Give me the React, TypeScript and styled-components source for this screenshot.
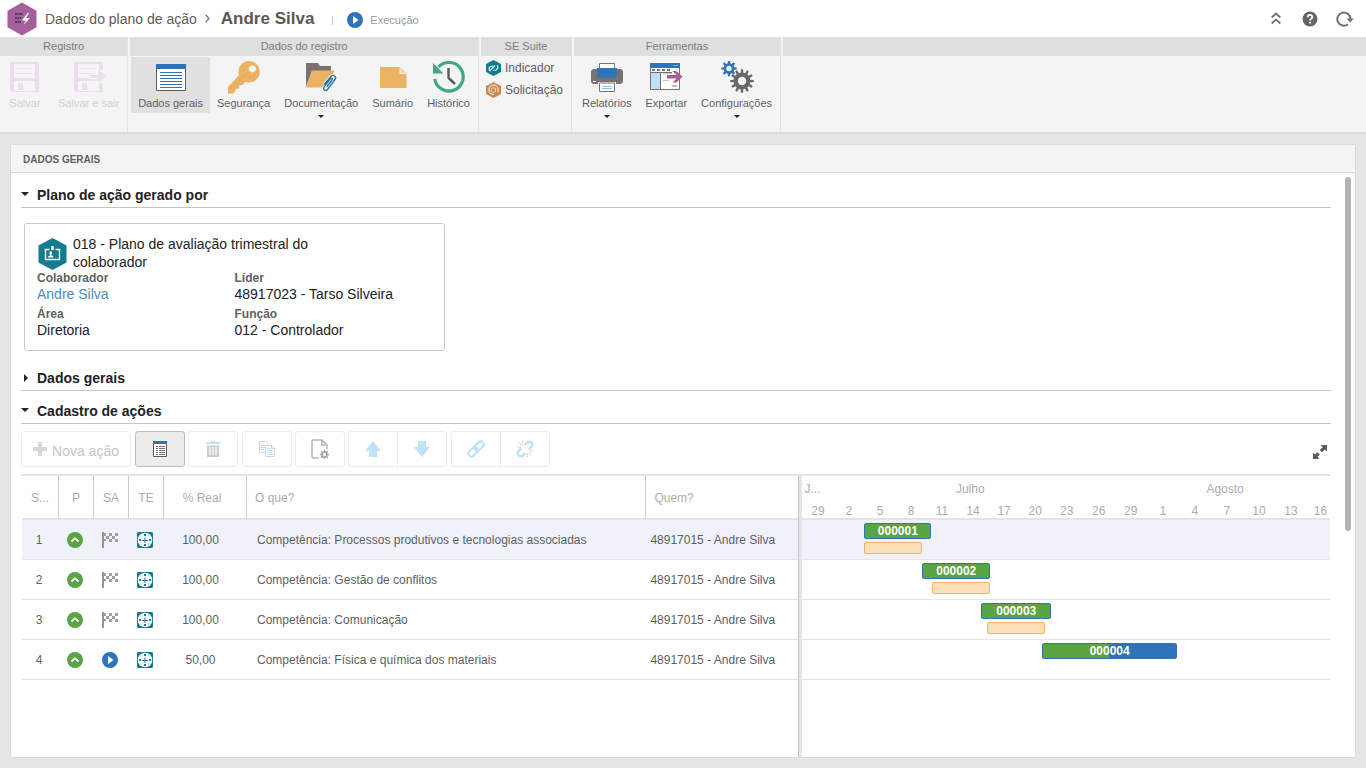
import React from "react";
import styled, { createGlobalStyle, css } from "styled-components";

const GlobalStyle = createGlobalStyle`
  *, *::before, *::after { box-sizing: border-box; }
  html, body, #root { height: 100%; }
  body {
    margin: 0;
    background: #e6e6e6;
    color: #5f5f5f;
    font-family: "Liberation Sans", Arial, sans-serif;
    font-size: 12px;
  }
  button { font: inherit; color: inherit; background: none; border: 0; padding: 0; margin: 0; }
  h1, h2, p, dl, dd, dt, ul { margin: 0; padding: 0; font: inherit; }
  ul { list-style: none; }
  svg { display: block; flex: none; }
`;

/* ---------- page ---------- */

const Page = styled.div`
  display: flex;
  flex-direction: column;
  min-height: 100vh;
`;

const TopBar = styled.header`
  display: flex;
  align-items: center;
  height: 37px;
  padding: 0 12px 0 7px;
  background: #fff;
`;

const Crumb = styled.a`
  margin: 0 8px 0 8px;
  color: #5c5c5c;
  font-size: 14px;
  text-decoration: none;
`;

const RecordName = styled.h1`
  margin-left: 11px;
  color: #5c5757;
  font-size: 17px;
  font-weight: bold;
`;

const Divider = styled.span`
  width: 1px;
  height: 9px;
  margin: 4px 14px 0 18px;
  background: #c9c9c9;
`;

const Status = styled.span`
  display: flex;
  align-items: center;
  gap: 7px;
  margin-top: 3px;
  color: #999;
  font-size: 11px;
`;

const TopActions = styled.div`
  display: flex;
  align-items: center;
  gap: 18px;
  margin-left: auto;
  button:first-child { margin-right: 3px; }
`;

/* ---------- ribbon ---------- */

const Ribbon = styled.nav`
  display: flex;
  gap: 2px;
  height: 97px;
  border-bottom: 2px solid #dcdcdc;
  background: #f4f4f4;
`;

const Group = styled.section<{ $fill?: boolean }>`
  display: flex;
  flex-direction: column;
  flex: ${(p) => (p.$fill ? "1" : "none")};
  border-right: ${(p) => (p.$fill ? "0" : "1px solid #e2e2e2")};
`;

const GroupTitle = styled.h2`
  height: 19px;
  background: #dfdfdf;
  color: #7b7b7b;
  font-size: 11px;
  line-height: 19px;
  text-align: center;
`;

const GroupBody = styled.div<{ $flush?: boolean }>`
  display: flex;
  align-items: flex-start;
  padding: 1px ${(p) => (p.$flush ? 0 : 1)}px 0;
`;

const LinkColumn = styled.div`
  display: flex;
  flex-direction: column;
  padding: 1px 8px 0 5px;
`;

const RibbonLink = styled.a`
  display: flex;
  align-items: center;
  gap: 4px;
  height: 22px;
  color: #5f5f5f;
  font-size: 12px;
  text-decoration: none;
`;

const RibbonItem = styled.button<{ $active?: boolean; $wide?: boolean }>`
  display: flex;
  flex-direction: column;
  align-items: center;
  min-height: 56px;
  padding: 4px ${(p) => (p.$wide ? 8 : 7)}px 0;
  background: ${(p) => (p.$active ? "#e0e0e0" : "transparent")};
  color: #5f5f5f;
  font-size: 11px;
  line-height: 14px;
  &:disabled { color: #cfcfcf; }
  svg + span { margin-top: 1px; }
`;

const Caret = styled.i`
  margin-top: 5px;
  border: 3px solid transparent;
  border-top-color: #222;
  border-bottom: 0;
`;

/* ---------- panel ---------- */

const Panel = styled.main`
  display: flex;
  flex: 1;
  flex-direction: column;
  margin: 10px;
  border: 1px solid #dadada;
  border-radius: 2px;
  background: #fff;
`;

const PanelTitle = styled.h2`
  height: 28px;
  padding-left: 12px;
  border-bottom: 1px solid #dadada;
  background: #f4f4f4;
  color: #5f5f5f;
  font-size: 10px;
  font-weight: bold;
  line-height: 29px;
`;

const PanelBody = styled.div`
  display: flex;
  flex: 1;
  padding: 2px 4px 0 10px;
`;

const Content = styled.div`
  display: flex;
  flex: 1;
  flex-direction: column;
  min-width: 0;
`;

const ScrollThumb = styled.div`
  width: 6px;
  height: 354px;
  margin: 2px 0 0 14px;
  border-radius: 3px;
  background: #b3b3b3;
`;

const SectionHead = styled.button<{ $open?: boolean }>`
  display: flex;
  align-items: center;
  width: 100%;
  height: 33px;
  padding-top: 8px;
  border-bottom: 1px solid #c4c4c4;
  color: #222;
  font-size: 14px;
  font-weight: bold;
  text-align: left;
  &::before {
    content: "";
    margin-right: ${(p) => (p.$open ? 8 : 9)}px;
    margin-left: ${(p) => (p.$open ? 0 : 3)}px;
    border: 4px solid transparent;
    ${(p) =>
      p.$open
        ? css`margin-bottom: 2px; border-top-color: #222; border-bottom: 0;`
        : css`border-left-color: #222; border-right: 0;`}
  }
`;

const Card = styled.article`
  width: 421px;
  height: 128px;
  margin: 15px 0 7px 3px;
  padding: 11px 12px;
  border: 1px solid #c9c9c9;
  border-radius: 3px;
  color: #222;
  font-size: 14px;
`;

const CardTitle = styled.div`
  display: flex;
  gap: 6px;
  height: 35px;
  max-width: 300px;
  line-height: 18px;
  svg { margin: 3px 0 0 1px; }
`;

const Fields = styled.dl`
  display: grid;
  grid-template-columns: 1fr 1fr;
  row-gap: 4px;
  line-height: 16px;
  dt { color: #5f5f5f; font-size: 12px; font-weight: bold; }
  a { color: #4c8bc4; text-decoration: none; }
`;

/* ---------- toolbar ---------- */

const Toolbar = styled.div`
  display: flex;
  gap: 4px;
  padding: 7px 4px 7px 0;
`;

const Cluster = styled.div`
  display: flex;
  gap: 3px;
`;

const Pair = styled.div`
  display: flex;
  button:first-child { border-radius: 3px 0 0 3px; }
  button:last-child { margin-left: -1px; border-radius: 0 3px 3px 0; }
`;

const ToolButton = styled.button<{ $active?: boolean; $wide?: boolean }>`
  display: flex;
  align-items: center;
  justify-content: center;
  gap: 5px;
  width: ${(p) => (p.$wide ? 110 : 50)}px;
  height: 36px;
  border: 1px solid ${(p) => (p.$active ? "#bdbdbd" : "#ececec")};
  border-radius: 3px;
  background: ${(p) => (p.$active ? "#ececec" : "#fff")};
  color: #c6c6c6;
  font-size: 14px;
  span { margin-top: 3px; }
`;

const ExpandButton = styled.button`
  align-self: center;
  margin: 6px 0 0 auto;
`;

/* ---------- plan grid ---------- */

const Plan = styled.div`
  display: flex;
  flex: 1;
  align-items: stretch;
  border-top: 2px solid #e4e4e4;
  margin-right: 1px;
`;

const ActionsPane = styled.div`
  flex: 777;
  min-width: 0;
  padding-left: 1px;
`;

const Splitter = styled.div`
  width: 4px;
  border-left: 1px solid #c6c6c6;
  background: #e6e6e6;
`;

const ActionsTable = styled.table`
  width: 100%;
  border-spacing: 0;
  table-layout: fixed;
  th, td { padding: 0; text-align: center; font-weight: normal; }
  th {
    height: 44px;
    padding-top: 2px;
    border-right: 1px solid #cbcbcb;
    border-bottom: 2px solid #e4e4e4;
    color: #acacac;
  }
  th:last-child { border-right: 0; }
  td { height: 40px; padding-right: 3px; border-bottom: 1px solid #e4e4e4; }
  td svg { margin: 0 auto; }
  th:nth-child(5) { padding-right: 6px; }
  td:nth-child(5) { padding-right: 10px; }
  th:nth-child(n + 6), td:nth-child(n + 6) { text-align: left; }
  th:nth-child(n + 6) { padding-left: 8px; }
  td:nth-child(6) { padding-left: 10px; }
  td:nth-child(7) { padding-left: 4px; }
`;

const ActionRow = styled.tr<{ $selected?: boolean }>`
  background: ${(p) => (p.$selected ? "#eff3f9" : "#fff")};
`;

const TimelinePane = styled.div`
  flex: 528;
  min-width: 0;
`;

const TimelineHead = styled.div`
  height: 44px;
  border-bottom: 2px solid #e4e4e4;
  color: #acacac;
  text-align: center;
`;

const Months = styled.div`
  display: grid;
  grid-template-columns: 22fr 292fr 218fr;
  margin-right: -4px;
  line-height: 27px;
  span:first-child { padding-left: 2px; text-align: left; }
`;

const Days = styled.div`
  display: grid;
  grid-template-columns: repeat(8, 31fr) repeat(8, 32fr) 23fr;
  line-height: 16px;
  span:last-child { padding-left: 4px; }
`;

const TimelineRow = styled.li<{ $selected?: boolean }>`
  display: flex;
  flex-direction: column;
  gap: 3px;
  height: 40px;
  padding-top: 3px;
  border-bottom: 1px solid #e4e4e4;
  background: ${(p) => (p.$selected ? "#eff3f9" : "#fff")};
`;

const Bar = styled.div<{ $half?: boolean }>`
  height: 16px;
  border: 1px solid #2f74b8;
  border-radius: 2px;
  background: ${(p) => (p.$half ? "linear-gradient(90deg, #5aa543 50%, #2f74b8 50%)" : "#5aa543")};
  color: #fff;
  font-weight: bold;
  line-height: 14px;
  text-align: center;
`;

const Baseline = styled.div`
  height: 12px;
  border: 1px solid #efb469;
  border-radius: 2px;
  background: #fcdfb6;
`;

/* ---------- drawings ---------- */

function gearPath(cx: number, cy: number, outer: number, inner: number, hole: number, teeth: number) {
  const step = (Math.PI * 2) / teeth;
  let d = "";
  for (let i = 0; i < teeth; i++) {
    const corners: [number, number][] = [[-0.3, inner], [-0.17, outer], [0.17, outer], [0.3, inner]];
    corners.forEach(([offset, r]) => {
      const a = (i + offset) * step;
      d += `${d ? "L" : "M"}${(cx + r * Math.cos(a)).toFixed(2)} ${(cy + r * Math.sin(a)).toFixed(2)}`;
    });
  }
  return `${d}ZM${cx + hole} ${cy}a${hole} ${hole} 0 1 0 ${-2 * hole} 0a${hole} ${hole} 0 1 0 ${2 * hole} 0Z`;
}

const RibbonSvg = ({ children }: { children: React.ReactNode }) => (
  <svg width="34" height="34" viewBox="0 0 34 34" fill="none" aria-hidden="true">{children}</svg>
);

const Floppy = ({ exit }: { exit?: boolean }) => (
  <RibbonSvg>
    <path d="M2 1h29v30H4l-2-2z" fill="#e8dfeb" />
    <path d="M6 3h21v14H6zM6 20h21v10H6z" fill="#f6f4f7" />
    <path d="M9 7.5h15M9 12.5h15" stroke="#e8e3ea" />
    <path d="M10 22h5v7h-5z" fill="#e8dfeb" />
    {exit && (
      <>
        <path d="M28 9h4v13h-4z" fill="#f4f4f4" />
        <path d="M18 13.5h8V9h2l6 6.500-6 6.500h-2v-4.500h-8z" fill="#e8dfeb" stroke="#f4f4f4" />
      </>
    )}
  </RibbonSvg>
);

const FormIcon = () => (
  <RibbonSvg>
    <path d="M2.500 3.500h29v26h-29z" fill="#fff" stroke="#605d5b" />
    <path d="M2 3h30v5H2z" fill="#2f74b8" />
    <path d="M6 11.500h22M6 14.500h22M6 17.500h22M6 20.500h22M6 23.500h22M6 26.500h22" stroke="#2f74b8" />
  </RibbonSvg>
);

const KeyIcon = () => (
  <RibbonSvg>
    <path
      d="M22 0a10.500 10.500 0 0 1 0 21.500l-4-.5-2.500 3h-3l-.5 3.500-3.500.5-.5 3-2 1.500H1v-6.500L11.700 14.500 11.500 11A10.500 10.500 0 0 1 22 0zM25.300 4.200a3.600 3.600 0 1 0 .01 0z"
      fill="#eab364" fillRule="evenodd"
    />
    <path d="M16 9h.8M19 13h.8M23 16h.8M27 14h.8M16 15h.8M12 19h.8M8 23h.8M4 27h.8" stroke="#c98846" />
  </RibbonSvg>
);

const FolderClipIcon = () => (
  <RibbonSvg>
    <path d="M2 2h12l2 3h11v5H8L2 26z" fill="#787372" />
    <path d="M8 9.500h22.500L25 26.500H2z" fill="#eab364" />
    <path
      d="m20 23.500 7-8c2.500-2.500 6 0 4 3l-7.500 10c-1.500 2-5 .5-3.500-2.500l6.500-8.500c1-1 2.500 0 1.500 1.500l-5 6.500"
      stroke="#f4f4f4" strokeWidth="3"
    />
    <path
      d="m20 23.500 7-8c2.500-2.500 6 0 4 3l-7.500 10c-1.500 2-5 .5-3.500-2.500l6.500-8.500c1-1 2.500 0 1.500 1.500l-5 6.500"
      stroke="#2273aa" strokeWidth="1.300"
    />
  </RibbonSvg>
);

const NoteIcon = () => (
  <RibbonSvg>
    <path d="M4 6h20l6.500 6.500V27H4z" fill="#eab364" />
    <path d="M24 6.500v6h6" fill="#f6dbb2" stroke="#f4f4f4" />
  </RibbonSvg>
);

const HistoryIcon = () => (
  <RibbonSvg>
    <path d="M6.500 6A14.300 14.300 0 1 1 2.800 18" stroke="#42a785" strokeWidth="3.200" />
    <path d="M1 2v10.500h10.500z" fill="#42a785" />
    <path d="M16.500 7v10l6.500 6" stroke="#5c5858" strokeWidth="2.400" />
  </RibbonSvg>
);

const PrinterIcon = () => (
  <RibbonSvg>
    <path d="M3 8h28l2 2v11l-2 2h-5v-2H8v2H3l-2-2V10z" fill="#787372" />
    <path d="M9.500 2.500h15v6h-15z" fill="#fff" stroke="#787372" />
    <path d="M7 7h20v8l-2 2H9l-2-2z" fill="#2f74b8" />
    <path d="M9.500 22h15v8.500h-15z" fill="#fff" stroke="#787372" />
    <path d="M12 25.500h10M12 27.500h10" stroke="#8ac4ea" />
    <path d="M3 20.500h3" stroke="#fff" />
  </RibbonSvg>
);

const ExportIcon = () => (
  <RibbonSvg>
    <path d="M1.500 2.500h29v26h-29z" fill="#fff" stroke="#787372" />
    <path d="M1 2h30v5H1z" fill="#2f74b8" />
    <path d="M24 4.500h5" stroke="#7eb0df" />
    <path d="M3 9h19" stroke="#787372" strokeWidth="2" strokeDasharray="3 2" />
    <path d="M1 11.500h22M11.500 12v17" stroke="#787372" />
    <path d="M2 12h9v16H2z" fill="#bfe0f6" />
    <path d="M14 12.500h9M14 19.500h6" stroke="#c5c5c5" />
    <path d="M23 25h5" stroke="#bbb" strokeWidth="2" />
    <path d="M18 14h9.500L23.500 10h4l6 5.700-6 5.800h-4l4-4H18z" fill="#a45d98" />
  </RibbonSvg>
);

const GearsIcon = () => (
  <RibbonSvg>
    <path d={gearPath(9, 7.5, 7.8, 5.4, 2.7, 8)} fill="#2f74b8" fillRule="evenodd" />
    <path d={gearPath(22, 20, 11.8, 8.4, 4.2, 12)} fill="#6b6767" fillRule="evenodd" />
  </RibbonSvg>
);

const HEXAGON = "M7.500 0 15 4v8l-7.500 4L0 12V4z";

const IndicatorIcon = () => (
  <svg width="15" height="16" viewBox="0 0 15 16" fill="none" aria-hidden="true">
    <path d={HEXAGON} fill="#147a90" />
    <path
      d="M7 6 4.500 6.500C2.800 7.500 2.500 10 4 10.800L9 5.500M7.500 10.500l2.500-.5c2-1 2.500-3.500 1-4.800"
      stroke="#e4f3f6" strokeWidth="1.200"
    />
  </svg>
);

const RequestIcon = () => (
  <svg width="15" height="16" viewBox="0 0 15 16" fill="none" aria-hidden="true">
    <path d={HEXAGON} fill="#c98a55" />
    <path d="M5.300 9.500C4.500 6.500 6.500 5 9.500 6.500c.5 2-.5 4-2 4s-2-.5-2.200-1" stroke="#f5e3d2" />
    <path d="M3 10V7.500a4.500 4.500 0 0 1 9 0V10M3.500 10.500c1 1.500 2.500 2 4.500 2" stroke="#f5e3d2" strokeWidth="1.200" />
  </svg>
);

const LogoIcon = () => (
  <svg width="30" height="34" viewBox="0 0 30 34" aria-hidden="true">
    <path d="M15 .500 29.500 8.700v16.600L15 33.500.500 25.300V8.700z" fill="#a4609a" />
    <path d="M8 12h8M8 16h6M8 20h6" stroke="#3d2c58" strokeWidth="1.500" strokeDasharray="2 .5" />
    <path d="M20.500 11 15 18.500h3.800L16.500 23l6.500-7h-4l3-5z" fill="#fff" />
  </svg>
);

const PlayIcon = () => (
  <svg width="16" height="16" viewBox="0 0 16 16" aria-hidden="true">
    <circle cx="8" cy="8" r="8" fill="#2f74b8" />
    <path d="M6 4v8l5.500-4z" fill="#fff" />
  </svg>
);

const BadgeIcon = () => (
  <svg width="29" height="32" viewBox="0 0 29 32" fill="none" aria-hidden="true">
    <path d="M14.500 0 28.500 7.500v17L14.500 32 .500 24.500v-17z" fill="#147a90" />
    <path d="M11.500 11.500h-4v10h14v-10h-4" stroke="#fff" strokeWidth="1.400" />
    <path d="M13.300 8h2.400v4h-2.400zM10 19.500c0-1.500 1-2 2-2V16h-.5v-2.500h2.500V16h-.5v1.500c1 0 2 .5 2 2z" fill="#fff" />
  </svg>
);

const PriorityIcon = () => (
  <svg width="16" height="16" viewBox="0 0 16 16" role="img" aria-label="Prioridade">
    <circle cx="8" cy="8" r="8" fill="#5aa543" />
    <path d="m4.500 9.500 3.500-3.200 3.500 3.200" fill="none" stroke="#fff" strokeWidth="2" />
  </svg>
);

const FlagIcon = () => (
  <svg width="16" height="16" viewBox="0 0 16 16" role="img" aria-label="Finalizada">
    <path d="M0 0h2v16H0z" fill="#949494" />
    <path d="M2 1h2v3H2zM7 1h3v3H7zM13 1h3v3h-3zM4 4h3v3H4zM10 4h3v3h-3zM2 7h2v2H2zM7 7h3v3H7zM13 7h3v3h-3z" fill="#a0a0a0" />
  </svg>
);

const DeadlineIcon = () => (
  <svg width="16" height="16" viewBox="0 0 16 16" role="img" aria-label="Prazo">
    <path d="M1 0h14l1 1v14l-1 1H1l-1-1V1z" fill="#147a90" />
    <circle cx="8" cy="8" r="7.300" fill="#fff" />
    <path d="M7 2h2v2H7zM7 12h2v2H7zM2 7h2v2H2zM12 7h2v2h-2zM5 8h6v1H5zM7.500 5.500h1V11h-1z" fill="#2a71b0" />
    <path d="M3.500 3.500h1v1h-1zM11.500 3.500h1v1h-1zM3.500 11.500h1v1h-1zM11.500 11.500h1v1h-1z" fill="#6fa3c9" />
  </svg>
);

const CollapseIcon = () => (
  <svg width="10" height="13" viewBox="0 0 10 13" fill="none" stroke="#777272" strokeWidth="2" aria-hidden="true">
    <path d="m.700 5.500 4.300-4 4.300 4M.700 11.500l4.300-4 4.300 4" />
  </svg>
);

const HelpIcon = () => (
  <svg width="16" height="16" viewBox="0 0 16 16" fill="none" aria-hidden="true">
    <circle cx="8" cy="8" r="7.500" fill="#686464" />
    <path d="M5.700 6.200c0-3 4.600-3 4.600-.2C10.300 7.800 8 7.500 8 9.500" stroke="#fff" strokeWidth="1.800" />
    <path d="M7 10.700h2v1.800H7z" fill="#fff" />
  </svg>
);

const RefreshIcon = () => (
  <svg width="18" height="16" viewBox="0 0 18 16" fill="none" aria-hidden="true">
    <path d="M12 13.300A6.600 6.600 0 1 1 14.500 8" stroke="#777272" strokeWidth="2" />
    <path d="M10.500 7.500H18l-3.800 4z" fill="#777272" />
  </svg>
);

const ToolSvg = ({ children }: { children: React.ReactNode }) => (
  <svg width="18" height="18" viewBox="0 0 18 18" fill="none" aria-hidden="true">{children}</svg>
);

const PlusIcon = () => (
  <svg width="14" height="14" viewBox="0 0 14 14" aria-hidden="true">
    <path d="M5 0h4v5h5v4H9v5H5V9H0V5h5z" fill="#d6d6d6" />
  </svg>
);

const ListIcon = () => (
  <ToolSvg>
    <path d="M2.500 1.500h13v15h-13z" fill="#fff" stroke="#5c5858" />
    <path d="M2 1h14v3H2z" fill="#2f74b8" />
    <path d="M5 6.500h2M8 6.500h6M5 8.500h2M8 8.500h6M5 10.500h2M8 10.500h6M5 12.500h2M8 12.500h6M5 14.500h2M8 14.500h6" stroke="#77716f" />
  </ToolSvg>
);

const TrashIcon = () => (
  <ToolSvg>
    <path d="M2 2h14v2H2zM7 1h4v1H7z" fill="#bfe2f7" />
    <path d="M3 5.500h12V17H3z" fill="#cdcdcd" />
    <path d="M6 7v8M9 7v8M12 7v8" stroke="#fff" strokeWidth="1.300" />
  </ToolSvg>
);

const CopyIcon = () => (
  <ToolSvg>
    <path d="M7 12.500H1.500v-11h6l3 3M3 5.500h4M3 7.500h4M3 9.500h3" stroke="#d6d6d6" />
    <path d="M7.500 5.500h6l3 3v8h-9zM13.500 5.500v3h3" fill="#fff" stroke="#d6d6d6" />
    <path d="M9 8.500h3M9 10.500h6M9 12.500h6M9 14.500h6" stroke="#bfe2f7" />
  </ToolSvg>
);

const DocGearIcon = () => (
  <svg width="18" height="20" viewBox="0 0 18 20" fill="none" aria-hidden="true">
    <path d="M8 19H2.200A1.200 1.200 0 0 1 1 17.800V2.200A1.200 1.200 0 0 1 2.200 1H11l5 5v4M11 1v5h5" stroke="#b5b5b5" strokeWidth="1.500" />
    <path d={gearPath(13.500, 15.500, 4.700, 3.300, 1.700, 8)} fill="#a2a2a2" fillRule="evenodd" />
  </svg>
);

const UpIcon = () => (
  <ToolSvg><path d="M9 1 17 11h-4v6H5v-6H1z" fill="#bfe2f7" /></ToolSvg>
);

const DownIcon = () => (
  <ToolSvg><path d="M9 17 1 7h4V1h8v6h4z" fill="#bfe2f7" /></ToolSvg>
);

const LinkIcon = () => (
  <ToolSvg>
    <g transform="rotate(-45 9 9)" stroke="#bfe2f7" strokeWidth="2.200">
      <rect x="-.5" y="6" width="10.500" height="6" rx="3" />
      <rect x="8" y="6" width="10.500" height="6" rx="3" />
    </g>
  </ToolSvg>
);

const UnlinkIcon = () => (
  <ToolSvg>
    <g transform="rotate(-45 9 9)" stroke="#bfe2f7" strokeWidth="2.500">
      <path d="M6.500 6H3a3 3 0 0 0 0 6h3.500M11.500 6H15a3 3 0 0 1 0 6h-3.500" />
    </g>
    <path d="M6.500 1v4M2.500 2.500l3 3M1 7h4M11.500 17v-4M15.500 15.500l-3-3M17 11h-4" stroke="#c4c4c4" strokeDasharray="1.500 .7" />
  </ToolSvg>
);

const ExpandIcon = () => (
  <svg width="14" height="14" viewBox="0 0 14 14" aria-hidden="true">
    <path d="M7.500 0H14v6.500l-2-2-3 2.800L6.800 5l3-3zM6.500 14H0V7.500l2 2 2.500-2.300L6.800 9.500 4.500 12z" fill="#5b5b5b" />
  </svg>
);

/* ---------- data ---------- */

const TIMELINE_SPAN = 528;
const pct = (units: number) => `${(units / TIMELINE_SPAN) * 100}%`;

const days = [29, 2, 5, 8, 11, 14, 17, 20, 23, 26, 29, 1, 4, 7, 10, 13, 16];

type Span = [start: number, length: number];
type Action = { id: number; real: string; what: string; running?: boolean; plan: Span; baseline?: Span };

const actions: Action[] = [
  { id: 1, real: "100,00", what: "Competência: Processos produtivos e tecnologias associadas", plan: [62, 67], baseline: [62, 58] },
  { id: 2, real: "100,00", what: "Competência: Gestão de conflitos", plan: [120, 68], baseline: [130, 58] },
  { id: 3, real: "100,00", what: "Competência: Comunicação", plan: [179, 70], baseline: [185, 58] },
  { id: 4, real: "50,00", what: "Competência: Física e química dos materiais", running: true, plan: [240, 135] },
];

/* ---------- app ---------- */

export default function App() {
  return (
    <Page>
      <GlobalStyle />
      <TopBar>
        <LogoIcon />
        <Crumb href="#plano">Dados do plano de ação</Crumb>
        <svg width="5" height="9" viewBox="0 0 5 9" fill="none" aria-hidden="true">
          <path d="m.700.700 3.300 3.800L.700 8.300" stroke="#8a8686" strokeWidth="1.600" />
        </svg>
        <RecordName>Andre Silva</RecordName>
        <Divider />
        <Status><PlayIcon />Execução</Status>
        <TopActions>
          <button aria-label="Recolher"><CollapseIcon /></button>
          <button aria-label="Ajuda"><HelpIcon /></button>
          <button aria-label="Atualizar"><RefreshIcon /></button>
        </TopActions>
      </TopBar>

      <Ribbon>
        <Group>
          <GroupTitle>Registro</GroupTitle>
          <GroupBody $flush>
            <RibbonItem disabled $wide><Floppy /><span>Salvar</span></RibbonItem>
            <RibbonItem disabled $wide><Floppy exit /><span>Salvar e sair</span></RibbonItem>
          </GroupBody>
        </Group>
        <Group>
          <GroupTitle>Dados do registro</GroupTitle>
          <GroupBody>
            <RibbonItem $active><FormIcon /><span>Dados gerais</span></RibbonItem>
            <RibbonItem><KeyIcon /><span>Segurança</span></RibbonItem>
            <RibbonItem><FolderClipIcon /><span>Documentação</span><Caret /></RibbonItem>
            <RibbonItem><NoteIcon /><span>Sumário</span></RibbonItem>
            <RibbonItem><HistoryIcon /><span>Histórico</span></RibbonItem>
          </GroupBody>
        </Group>
        <Group>
          <GroupTitle>SE Suite</GroupTitle>
          <LinkColumn>
            <RibbonLink href="#indicador"><IndicatorIcon />Indicador</RibbonLink>
            <RibbonLink href="#solicitacao"><RequestIcon />Solicitação</RibbonLink>
          </LinkColumn>
        </Group>
        <Group>
          <GroupTitle>Ferramentas</GroupTitle>
          <GroupBody>
            <RibbonItem><PrinterIcon /><span>Relatórios</span><Caret /></RibbonItem>
            <RibbonItem><ExportIcon /><span>Exportar</span></RibbonItem>
            <RibbonItem><GearsIcon /><span>Configurações</span><Caret /></RibbonItem>
          </GroupBody>
        </Group>
        <Group $fill><GroupTitle /></Group>
      </Ribbon>

      <Panel>
        <PanelTitle>DADOS GERAIS</PanelTitle>
        <PanelBody>
          <Content>
            <SectionHead $open aria-expanded="true">Plano de ação gerado por</SectionHead>
            <Card>
              <CardTitle>
                <BadgeIcon />
                <p>018 - Plano de avaliação trimestral do colaborador</p>
              </CardTitle>
              <Fields>
                <div><dt>Colaborador</dt><dd><a href="#andre">Andre Silva</a></dd></div>
                <div><dt>Líder</dt><dd>48917023 - Tarso Silveira</dd></div>
                <div><dt>Área</dt><dd>Diretoria</dd></div>
                <div><dt>Função</dt><dd>012 - Controlador</dd></div>
              </Fields>
            </Card>
            <SectionHead aria-expanded="false">Dados gerais</SectionHead>
            <SectionHead $open aria-expanded="true">Cadastro de ações</SectionHead>

            <Toolbar>
              <ToolButton $wide disabled><PlusIcon /><span>Nova ação</span></ToolButton>
              <Cluster>
                <ToolButton $active aria-label="Detalhes"><ListIcon /></ToolButton>
                <ToolButton disabled aria-label="Excluir"><TrashIcon /></ToolButton>
              </Cluster>
              <Cluster>
                <ToolButton disabled aria-label="Copiar"><CopyIcon /></ToolButton>
                <ToolButton disabled aria-label="Configurar"><DocGearIcon /></ToolButton>
                <Pair>
                  <ToolButton disabled aria-label="Mover para cima"><UpIcon /></ToolButton>
                  <ToolButton disabled aria-label="Mover para baixo"><DownIcon /></ToolButton>
                </Pair>
              </Cluster>
              <Pair>
                <ToolButton disabled aria-label="Vincular"><LinkIcon /></ToolButton>
                <ToolButton disabled aria-label="Desvincular"><UnlinkIcon /></ToolButton>
              </Pair>
              <ExpandButton aria-label="Expandir"><ExpandIcon /></ExpandButton>
            </Toolbar>

            <Plan>
              <ActionsPane>
                <ActionsTable>
                  <colgroup>
                    <col width="37" /><col width="35" /><col width="35" /><col width="35" />
                    <col width="83" /><col /><col width="152" />
                  </colgroup>
                  <thead>
                    <tr>
                      <th>S...</th><th>P</th><th>SA</th><th>TE</th><th>% Real</th><th>O que?</th><th>Quem?</th>
                    </tr>
                  </thead>
                  <tbody>
                    {actions.map((a) => (
                      <ActionRow key={a.id} $selected={a.id === 1}>
                        <td>{a.id}</td>
                        <td><PriorityIcon /></td>
                        <td>{a.running ? <PlayIcon /> : <FlagIcon />}</td>
                        <td><DeadlineIcon /></td>
                        <td>{a.real}</td>
                        <td>{a.what}</td>
                        <td>48917015 - Andre Silva</td>
                      </ActionRow>
                    ))}
                  </tbody>
                </ActionsTable>
              </ActionsPane>
              <Splitter />
              <TimelinePane>
                <TimelineHead>
                  <Months><span>J...</span><span>Julho</span><span>Agosto</span></Months>
                  <Days>{days.map((d, i) => <span key={i}>{d}</span>)}</Days>
                </TimelineHead>
                <ul>
                  {actions.map((a) => (
                    <TimelineRow key={a.id} $selected={a.id === 1}>
                      <Bar $half={a.running} style={{ marginLeft: pct(a.plan[0]), width: pct(a.plan[1]) }}>
                        {String(a.id).padStart(6, "0")}
                      </Bar>
                      {a.baseline && (
                        <Baseline style={{ marginLeft: pct(a.baseline[0]), width: pct(a.baseline[1]) }} />
                      )}
                    </TimelineRow>
                  ))}
                </ul>
              </TimelinePane>
            </Plan>
          </Content>
          <ScrollThumb />
        </PanelBody>
      </Panel>
    </Page>
  );
}
